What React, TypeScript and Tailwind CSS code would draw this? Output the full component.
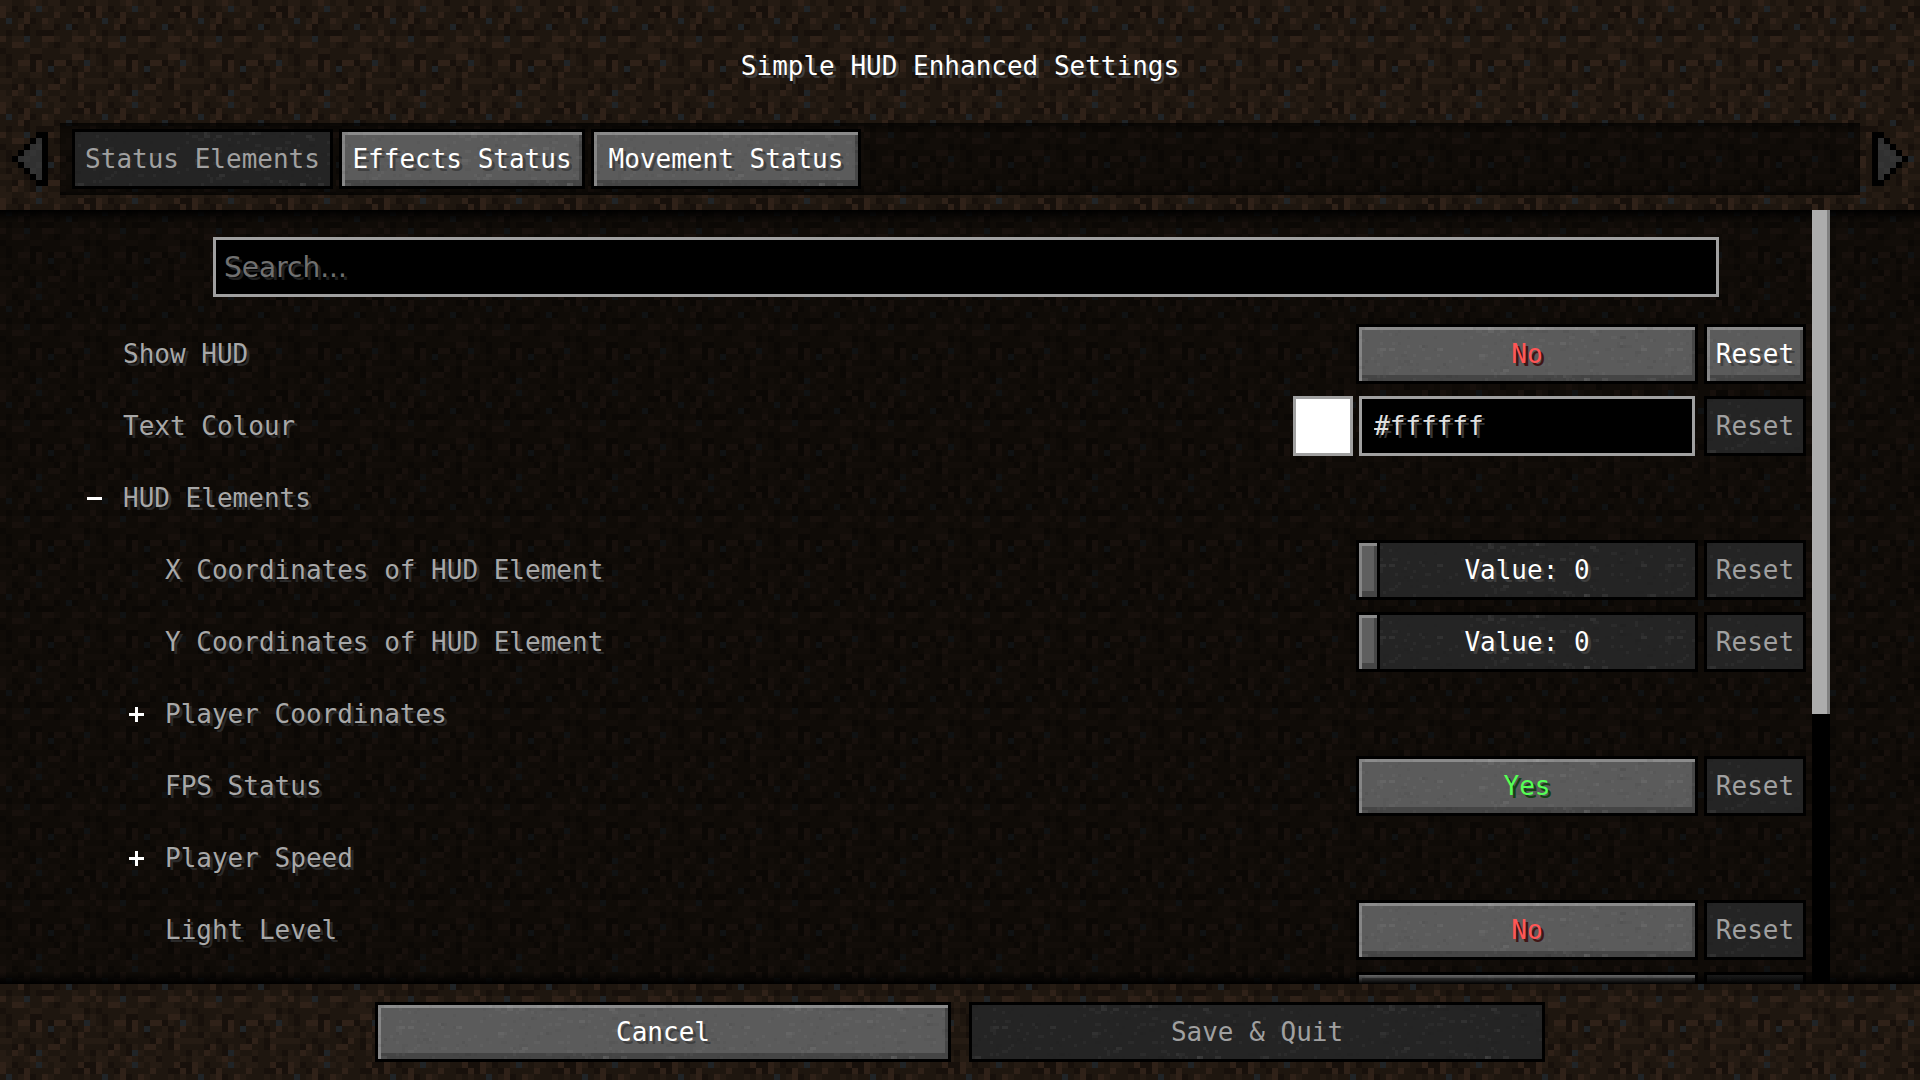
import React, { useState } from 'react';
import clsx from 'clsx';

// 16x16 dirt block, one letter per pixel
const DIRT = [
    'ccbbcdcbccabbbcb',
    'dcabbcgcbccbbdaa',
    'dbbadbbbbdbbaada',
    'bgbcdabdcbbbcbcb',
    'bbbdabbccabgabbc',
    'babbabaaabbbcbbd',
    'dbccgbbddcbbddcb',
    'bbddcbbcbabccbbc',
    'abbbbccbbbccccab',
    'babbcaabbbbbddbc',
    'babddadbaddacbgc',
    'cbbccadbgbbcabdb',
    'bacbbccbabccbdbb',
    'ccbbabbbbadbaccc',
    'bbadbacbddbbadbb',
    'cbdcbagcbbcbbcba',
];

const DIRT_COLORS: Record<string, string> = {
    a: '#17100b',
    b: '#1e160f',
    c: '#251b13',
    d: '#2f2118',
    g: '#202427',
};

const LEFT_ARROW = ['....##', '...#o#', '..#oo#', '.#ooo#', '#oooo#', '.#ooo#', '..#oo#', '...#o#', '....##'];

type RowData = {
    id: string;
    label: string;
    level: 0 | 1;
    kind: 'toggle' | 'color' | 'slider' | 'group';
    open?: boolean;
    value?: boolean;
    changed?: boolean;
};

const ROWS: RowData[] = [
    { id: 'show-hud', label: 'Show HUD', level: 0, kind: 'toggle', value: false, changed: true },
    { id: 'text-colour', label: 'Text Colour', level: 0, kind: 'color' },
    { id: 'hud-elements', label: 'HUD Elements', level: 0, kind: 'group', open: true },
    { id: 'hud-x', label: 'X Coordinates of HUD Element', level: 1, kind: 'slider' },
    { id: 'hud-y', label: 'Y Coordinates of HUD Element', level: 1, kind: 'slider' },
    { id: 'player-coordinates', label: 'Player Coordinates', level: 1, kind: 'group' },
    { id: 'fps-status', label: 'FPS Status', level: 1, kind: 'toggle', value: true },
    { id: 'player-speed', label: 'Player Speed', level: 1, kind: 'group' },
    { id: 'light-level', label: 'Light Level', level: 1, kind: 'toggle', value: false },
];

const DirtBackground: React.FC = () => (
    <svg className="absolute inset-0 -z-10 w-full h-full" shapeRendering="crispEdges" aria-hidden="true">
        <defs>
            <pattern id="dirt" width="96" height="96" patternUnits="userSpaceOnUse">
                {DIRT.map((line, y) =>
                    line.split('').map((c, x) => (
                        <rect key={`${x}-${y}`} x={x * 6} y={y * 6} width="6" height="6" fill={DIRT_COLORS[c]} />
                    ))
                )}
            </pattern>
            <pattern id="speckle" width="288" height="54" patternUnits="userSpaceOnUse">
                {Array.from({ length: 240 }, (_, i) => {
                    const n = Math.abs(Math.sin(i * 12.9898) * 43758.5453) % 1;
                    const m = Math.abs(Math.sin(i * 78.233) * 24634.6345) % 1;
                    return (
                        <rect
                            key={i}
                            x={Math.floor(n * 95) * 3}
                            y={Math.floor(m * 18) * 3}
                            width={i % 3 === 0 ? 6 : 3}
                            height="3"
                            fill={i % 2 ? '#fff' : '#000'}
                            opacity={i % 9 === 0 ? 0.06 : 0.03}
                        />
                    );
                })}
            </pattern>
        </defs>
        <rect width="100%" height="100%" fill="url(#dirt)" />
    </svg>
);

const Speckle: React.FC = () => (
    <svg className="absolute inset-0 w-full h-full pointer-events-none" shapeRendering="crispEdges" aria-hidden="true">
        <rect width="100%" height="100%" fill="url(#speckle)" />
    </svg>
);

const Arrow: React.FC<{ flip?: boolean }> = ({ flip }) => (
    <svg width="36" height="54" viewBox="0 0 6 9" shapeRendering="crispEdges" className={clsx(flip && '-scale-x-100')}>
        {LEFT_ARROW.map((line, y) =>
            line.split('').map((c, x) =>
                c === '.' ? null : (
                    <rect key={`${x}-${y}`} x={x} y={y} width="1" height="1" fill={c === '#' ? '#000' : (x + y) % 3 ? '#303030' : '#343434'} />
                )
            )
        )}
    </svg>
);

interface McButtonProps extends React.ButtonHTMLAttributes<HTMLButtonElement> {
    tone?: 'white' | 'red' | 'green';
}

const McButton: React.FC<McButtonProps> = ({ tone = 'white', className, disabled, children, ...rest }) => (
    <button
        type="button"
        disabled={disabled}
        className={clsx(
            'relative h-[60px] shrink-0 border-3 border-black text-center whitespace-nowrap',
            disabled
                ? 'bg-[#242424] text-[#a0a0a0]'
                : 'bg-[#5b5b5b] shadow-[inset_0_3px_#8b8b8b,inset_3px_0_#858585,inset_0_-6px_#454545,inset_-3px_0_#474747]',
            !disabled && tone === 'white' && 'text-white [text-shadow:3px_3px_#3f3f3f]',
            !disabled && tone === 'red' && 'text-[#ff5555] [text-shadow:3px_3px_#3f1515]',
            !disabled && tone === 'green' && 'text-[#55ff55] [text-shadow:3px_3px_#153f15]',
            className
        )}
        {...rest}
    >
        <Speckle />
        <span className="relative">{children}</span>
    </button>
);

const FoldIcon: React.FC<{ open?: boolean }> = ({ open }) => (
    <svg width="15" height="15" viewBox="0 0 5 5" shapeRendering="crispEdges" fill="#fff">
        <rect x="0" y="2" width="5" height="1" />
        {!open && <rect x="2" y="0" width="1" height="5" />}
    </svg>
);

const Control: React.FC<{ row: RowData }> = ({ row }) => {
    const [on, setOn] = useState(!!row.value);
    const [color, setColor] = useState('#ffffff');
    const [amount, setAmount] = useState(0);

    if (row.kind === 'toggle') {
        return (
            <McButton id={row.id} tone={on ? 'green' : 'red'} className="w-[342px]" onClick={() => setOn(!on)}>
                {on ? 'Yes' : 'No'}
            </McButton>
        );
    }
    if (row.kind === 'color') {
        return (
            <div className="flex gap-1.5 pr-[3px]">
                <input
                    type="color"
                    aria-label="Pick text colour"
                    value={color}
                    onChange={(e) => setColor(e.target.value)}
                    className="size-[60px] border-3 border-[#a0a0a0] bg-white p-0 [&::-webkit-color-swatch-wrapper]:p-0 [&::-webkit-color-swatch]:border-0"
                />
                <input
                    id={row.id}
                    type="text"
                    value={color}
                    onChange={(e) => setColor(e.target.value)}
                    className="w-[336px] h-[60px] border-3 border-[#a0a0a0] bg-black px-3 text-[#e0e0e0] [text-shadow:3px_3px_#383838] outline-none"
                />
            </div>
        );
    }
    return (
        <div className="relative w-[342px] h-[60px] border-3 border-black bg-[#242424]">
            <Speckle />
            <input
                id={row.id}
                type="range"
                min={0}
                max={100}
                value={amount}
                onChange={(e) => setAmount(Number(e.target.value))}
                className="relative block w-full h-full appearance-none bg-transparent outline-none [&::-webkit-slider-thumb]:appearance-none [&::-webkit-slider-thumb]:w-[21px] [&::-webkit-slider-thumb]:h-[54px] [&::-webkit-slider-thumb]:border-r-3 [&::-webkit-slider-thumb]:border-black [&::-webkit-slider-thumb]:bg-[#5f5f5f] [&::-webkit-slider-thumb]:shadow-[inset_0_3px_#8b8b8b,inset_3px_0_#858585,inset_0_-6px_#454545,inset_-3px_0_#474747]"
            />
            <span className="absolute inset-0 flex items-center justify-center text-white [text-shadow:3px_3px_#3f3f3f] pointer-events-none">
                Value: {amount}
            </span>
        </div>
    );
};

const SettingRow: React.FC<{ row: RowData }> = ({ row }) => {
    const text = 'text-[#a8a8a8] [text-shadow:3px_3px_#2a2a2a]';

    if (row.kind === 'group') {
        return (
            <div className={clsx('flex h-[60px]', row.level === 0 ? 'pl-[87px]' : 'pl-[129px]')}>
                <button type="button" aria-expanded={!!row.open} className={clsx('flex items-center gap-[21px]', text)}>
                    <FoldIcon open={row.open} />
                    {row.label}
                </button>
            </div>
        );
    }
    return (
        <div className={clsx('flex items-center justify-between h-[60px]', row.level === 0 ? 'pl-[123px]' : 'pl-[165px]')}>
            <label htmlFor={row.id} className={text}>{row.label}</label>
            <div className="flex gap-1.5">
                <Control row={row} />
                <McButton disabled={!row.changed} className="w-[102px]">Reset</McButton>
            </div>
        </div>
    );
};

const App: React.FC = () => {
    const [search, setSearch] = useState('');

    return (
        <div className="relative isolate flex flex-col h-screen overflow-hidden text-[26px] leading-9 font-['DejaVu_Sans_Mono',monospace]">
            <DirtBackground />

            <header className="shrink-0 pt-12 pb-[15px]">
                <h1 className="text-center text-white [text-shadow:3px_3px_#3f3f3f]">Simple HUD Enhanced Settings</h1>
                <div className="flex items-center gap-3 px-3 mt-[39px]">
                    <button type="button" disabled aria-label="Previous tabs"><Arrow /></button>
                    <nav className="flex flex-1 gap-1.5 px-3 py-1.5 bg-black/50 shadow-[inset_0_9px_9px_-9px_#000,inset_0_-9px_9px_-9px_#000]">
                        <McButton disabled className="w-[261px]">Status Elements</McButton>
                        <McButton className="w-[246px]">Effects Status</McButton>
                        <McButton className="w-[270px]">Movement Status</McButton>
                    </nav>
                    <button type="button" disabled aria-label="Next tabs"><Arrow flip /></button>
                </div>
            </header>

            <main className="relative flex flex-1 min-h-0 overflow-hidden bg-black/50 pr-[90px]">
                <div className="flex-1 min-w-0 pt-[27px] pr-1.5">
                    <input
                        type="text"
                        aria-label="Search"
                        placeholder="Search..."
                        value={search}
                        onChange={(e) => setSearch(e.target.value)}
                        className="block ml-[213px] w-[calc(100%-300px)] h-[60px] border-3 border-[#a0a0a0] bg-black px-2 text-[28px] font-['DejaVu_Sans',sans-serif] text-[#e0e0e0] placeholder:text-[#707070] [text-shadow:3px_3px_#202020] outline-none"
                    />
                    <div className="flex flex-col gap-3 mt-[27px]">
                        {ROWS.map((row) => <SettingRow key={row.id} row={row} />)}
                        {/* top edge of the next row, the rest is below the fold */}
                        <div className="flex justify-end gap-1.5" aria-hidden="true">
                            <McButton tabIndex={-1} className="w-[342px]" />
                            <McButton disabled className="w-[102px]" />
                        </div>
                    </div>
                </div>
                <div className="absolute inset-x-0 top-0 h-3 bg-linear-to-b from-black to-transparent pointer-events-none" />
                <div className="absolute inset-x-0 bottom-0 h-3 bg-linear-to-t from-black to-transparent pointer-events-none" />
                <div className="relative w-[18px] bg-black">
                    <div className="h-[504px] border-r-3 border-[#808080] bg-[#acacac]" />
                </div>
            </main>

            <footer className="flex shrink-0 justify-center gap-[18px] py-[18px]">
                <McButton className="w-[576px]">Cancel</McButton>
                <McButton disabled className="w-[576px]">Save &amp; Quit</McButton>
            </footer>
        </div>
    );
};

export default App;
